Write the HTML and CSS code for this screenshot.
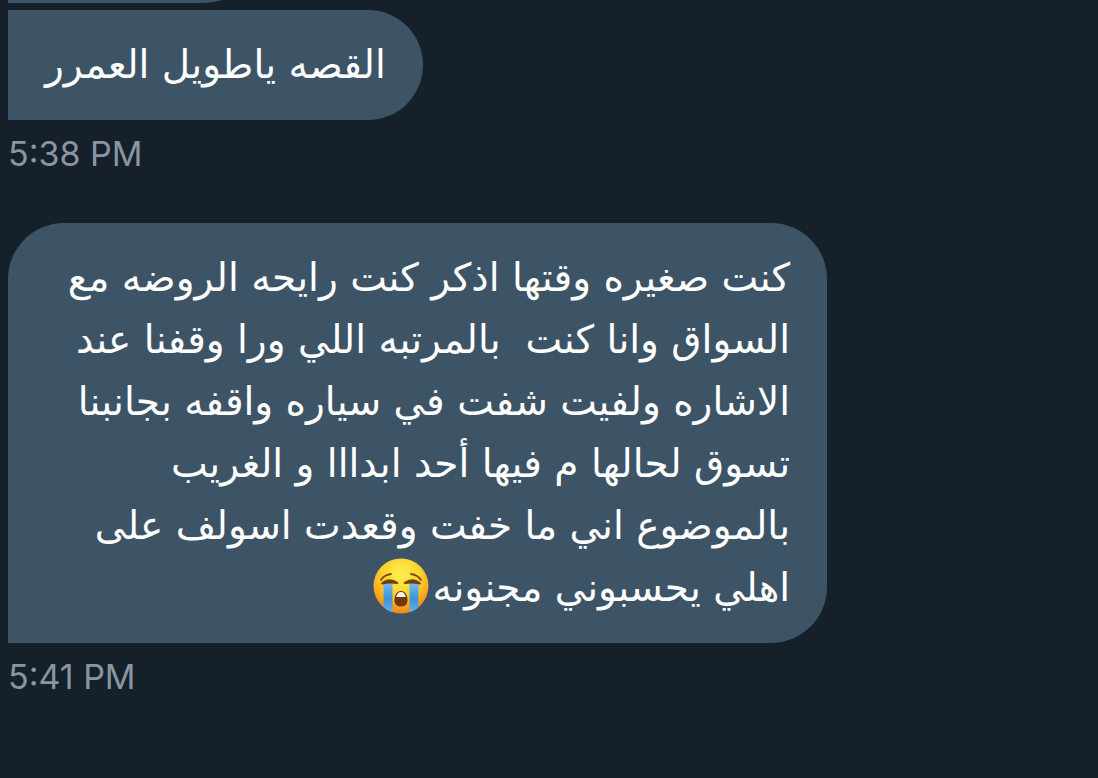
FILE: index.html
```
<!DOCTYPE html>
<html>
<head>
    <meta charset="utf-8">
    <title>Messages</title>
    <link rel="stylesheet" href="styles.css">
</head>
<body>

<main class="chat">
    <div class="previous">
        <div class="bubble bubble-empty"></div>
    </div>

    <div class="message">
        <p class="bubble joined" dir="rtl" lang="ar">القصه ياطويل العمرر</p>
        <time class="time">5:38 PM</time>
    </div>

    <div class="message">
        <p class="bubble long" dir="rtl" lang="ar">
            كنت صغيره وقتها اذكر كنت رايحه الروضه مع<br>
            السواق وانا كنت&nbsp; بالمرتبه اللي ورا وقفنا عند<br>
            الاشاره ولفيت شفت في سياره واقفه بجانبنا<br>
            تسوق لحالها م فيها أحد ابدااا و الغريب<br>
            بالموضوع اني ما خفت وقعدت اسولف على<br>
            اهلي يحسبوني مجنونه<svg class="emoji" viewBox="0 0 56 56" role="img" aria-label="Loudly crying face">
                <defs>
                    <radialGradient id="face" cx="50%" cy="30%" r="70%">
                        <stop offset="0" stop-color="#fff04e"/>
                        <stop offset="0.5" stop-color="#fed22f"/>
                        <stop offset="0.8" stop-color="#f9a51c"/>
                        <stop offset="1" stop-color="#ec8718"/>
                    </radialGradient>
                    <linearGradient id="tear" x1="0" y1="0" x2="0" y2="1">
                        <stop offset="0" stop-color="#6fbcf2"/>
                        <stop offset="0.5" stop-color="#3f93dc"/>
                        <stop offset="1" stop-color="#68b5ee"/>
                    </linearGradient>
                    <clipPath id="round"><circle cx="28" cy="28" r="27.5"/></clipPath>
                </defs>
                <circle cx="28" cy="28" r="27.5" fill="url(#face)"/>
                <g clip-path="url(#round)">
                    <path d="M10.500 25H19.500V56H10.500ZM36.500 25H45.500V56H36.500Z" fill="url(#tear)"/>
                </g>
                <path d="M8 22Q11 17 18 16M48 22Q45 17 38 16" fill="none" stroke="#864a0c" stroke-width="1.800" stroke-linecap="round"/>
                <path d="M9 25.500Q16 19 24.500 25Q16 24 9 25.500ZM47 25.500Q40 19 31.500 25Q40 24 47 25.500Z" fill="#71400c" stroke="#71400c" stroke-width="1.800" stroke-linejoin="round"/>
                <path d="M28 33C24 33 21.500 37 21.500 42C21.500 46.500 24 48.500 28 48.500S34.500 46.500 34.500 42C34.500 37 32 33 28 33Z" fill="#713706"/>
                <path d="M28 34C25.500 34 23.800 36 23.200 39H32.800C32.200 36 30.500 34 28 34Z" fill="#fff"/>
            </svg>
        </p>
        <time class="time">5:41 PM</time>
    </div>
</main>

</body>
</html>
```
FILE: styles.css
```
body {
    margin: 0;
    background-color: #15202b;
}

.chat {
    display: flex;
    flex-direction: column;
    padding: 0 8px;
}

/* tail end of the message scrolled off the top */
.previous {
    display: flex;
    align-items: flex-end;
    height: 3px;
    margin-bottom: 7px;
    overflow: hidden;
}

.message {
    display: flex;
    flex-direction: column;
    align-items: flex-start;
    margin-bottom: 48px;
}

.bubble {
    box-sizing: border-box;
    margin: 0;
    padding: 24px 37px;
    background-color: #3d5466;
    border-radius: 56px 56px 56px 0;
    color: white;
    font-family: "DejaVu Sans", sans-serif;
    font-size: 39px;
    line-height: 62px;
}

.bubble-empty {
    flex-shrink: 0;
    width: 252px;
    height: 112px;
}

.joined {
    border-radius: 0 56px 56px 0;
}

.long {
    width: 75.7%;
    white-space: nowrap;
}

.emoji {
    width: 56px;
    height: 56px;
    margin-right: 4px;
    vertical-align: -13px;
}

.time {
    margin-top: 13px;
    color: #8995a1;
    font-family: Inter, sans-serif;
    font-size: 34px;
    line-height: 42px;
}
```
